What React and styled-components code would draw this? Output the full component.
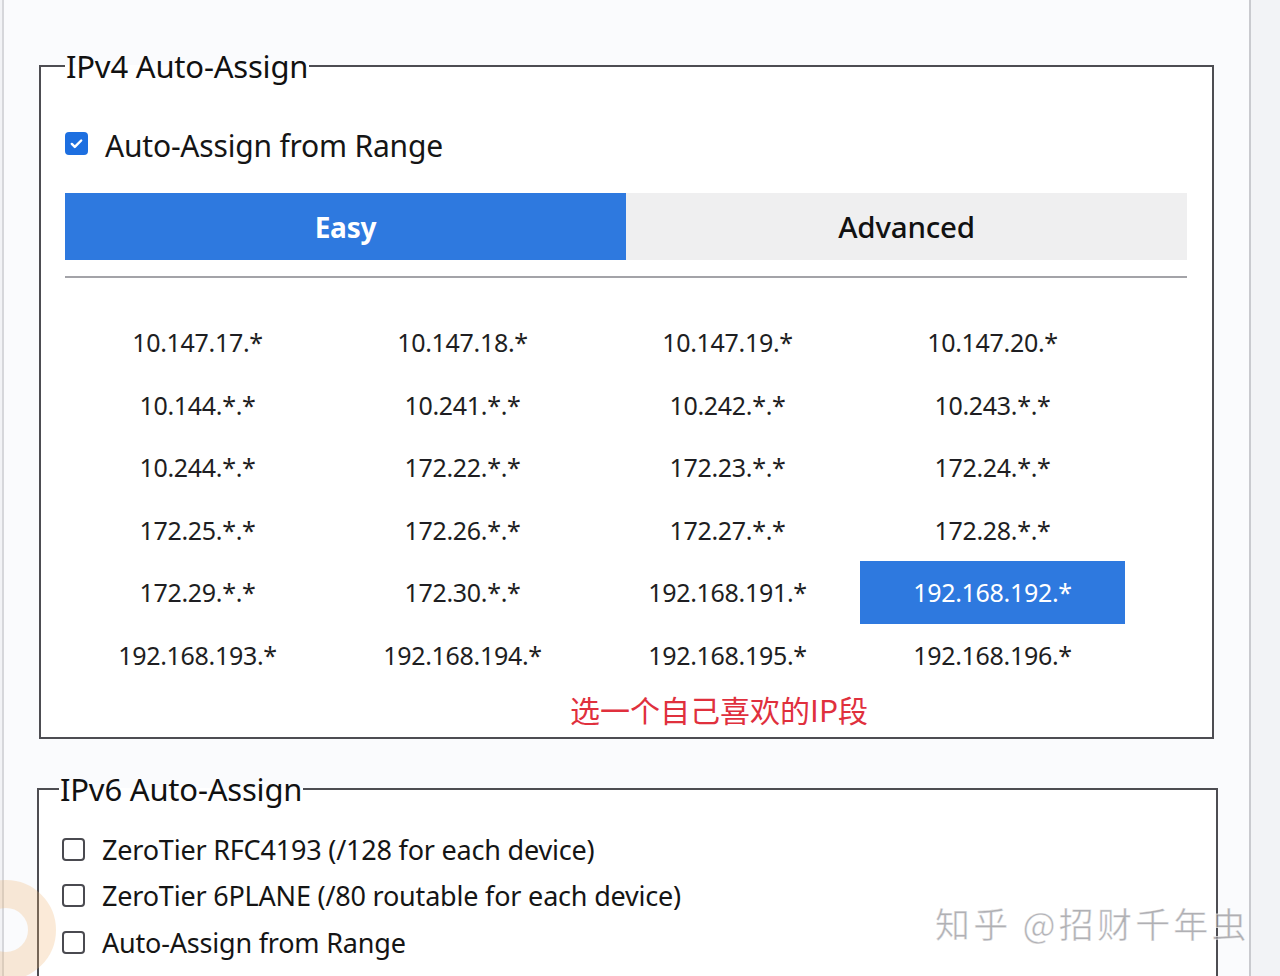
import styled, { createGlobalStyle } from "styled-components";

const ranges = [
  "10.147.17.*", "10.147.18.*", "10.147.19.*", "10.147.20.*",
  "10.144.*.*", "10.241.*.*", "10.242.*.*", "10.243.*.*",
  "10.244.*.*", "172.22.*.*", "172.23.*.*", "172.24.*.*",
  "172.25.*.*", "172.26.*.*", "172.27.*.*", "172.28.*.*",
  "172.29.*.*", "172.30.*.*", "192.168.191.*", "192.168.192.*",
  "192.168.193.*", "192.168.194.*", "192.168.195.*", "192.168.196.*",
];

const ipv6Options = [
  "ZeroTier RFC4193 (/128 for each device)",
  "ZeroTier 6PLANE (/80 routable for each device)",
  "Auto-Assign from Range",
];

const GlobalStyle = createGlobalStyle`
  html, body {
    margin: 0;
    padding: 0;
    background: #f2f3f6;
    font-family: "Noto Sans", "Noto Sans CJK SC", sans-serif;
    color: #1b1b1f;
  }
`;

const Page = styled.div`
  position: relative;
  display: flex;
  width: 1280px;
  height: 976px;
  overflow: hidden;
`;

const Panel = styled.div`
  width: 1249px;
  margin-left: 2px;
  border-left: 2px solid #d6d7db;
  border-right: 2px solid #c9cacf;
  background: #fafbfd;
  padding: 50px 0 0 35px;
  box-sizing: border-box;
`;

const Fieldset = styled.fieldset`
  margin: 0;
  width: ${(p) => p.$width}px;
  box-sizing: border-box;
  border: 2px solid #4d4d52;
  padding: ${(p) => p.$padding};
  background: #ffffff;
  margin-left: ${(p) => p.$offset || 0}px;
`;

const Legend = styled.legend`
  font-size: 31px;
  line-height: 32px;
  padding: 0 1px;
  margin-left: ${(p) => p.$shift || 0}px;
  color: #111;
  letter-spacing: -0.2px;
`;

const CheckRow = styled.label`
  display: flex;
  align-items: center;
  gap: 17px;
  font-size: ${(p) => p.$size}px;
  height: ${(p) => p.$height}px;
  color: #151515;
  letter-spacing: -0.2px;
`;

const Box = styled.span`
  width: 23px;
  height: 23px;
  box-sizing: border-box;
  border-radius: 4px;
  flex-shrink: 0;
  display: flex;
  align-items: center;
  justify-content: center;
  margin-bottom: ${(p) => (p.$checked ? 4 : 0)}px;
  background: ${(p) => (p.$checked ? "#1d6fe0" : "#fff")};
  border: ${(p) => (p.$checked ? "none" : "2px solid #4a4a50")};
`;

const Tabs = styled.div`
  display: grid;
  grid-template-columns: 1fr 1fr;
  height: 67px;
  margin-top: 26px;
`;

const Tab = styled.div`
  display: flex;
  align-items: center;
  justify-content: center;
  font-size: ${(p) => (p.$active ? 28 : 29.5)}px;
  font-weight: ${(p) => (p.$active ? 700 : 500)};
  color: ${(p) => (p.$active ? "#fff" : "#111")};
  background: ${(p) => (p.$active ? "#2e79df" : "#efeff0")};
  letter-spacing: -0.2px;
`;

const Rule = styled.div`
  height: 2px;
  background: #a3a3a8;
  margin-top: 16px;
`;

const Grid = styled.div`
  display: grid;
  grid-template-columns: repeat(4, 265px);
  grid-auto-rows: 62.5px;
  margin-top: 33px;
`;

const Cell = styled.div`
  display: flex;
  align-items: center;
  justify-content: center;
  font-size: 25px;
  color: ${(p) => (p.$active ? "#fff" : "#1e1e22")};
  background: ${(p) => (p.$active ? "#2e79df" : "transparent")};
  letter-spacing: -0.3px;
`;

const Hint = styled.div`
  text-align: center;
  color: #e0303d;
  font-size: 30px;
  line-height: 44px;
  font-family: "Noto Sans CJK SC", sans-serif;
  margin-top: 1px;
  padding-left: 186px;
  height: 50px;
`;

const Options = styled.div`
  display: flex;
  flex-direction: column;
  margin-top: 21px;
`;

const Watermark = styled.div`
  position: absolute;
  left: 935px;
  top: 897px;
  font-family: "Noto Sans CJK SC", sans-serif;
  font-size: 35px;
  color: rgba(150, 150, 155, 0.75);
  -webkit-text-stroke: 1px rgba(255, 255, 255, 0.6);
  letter-spacing: 3.2px;
  white-space: nowrap;
`;

const Blob = styled.svg`
  position: absolute;
  left: -44px;
  top: 880px;
  opacity: 0.25;
`;

const Check = () => (
  <svg width="15" height="15" viewBox="0 0 16 16">
    <path d="M3 8.5l3.2 3.2L13 4.8" fill="none" stroke="#fff" strokeWidth="2.6" strokeLinecap="round" strokeLinejoin="round" />
  </svg>
);

export default function App() {
  return (
    <Page>
      <GlobalStyle />
      <Panel>
        <Fieldset $width={1175} $padding="0 25px 0 24px">
          <Legend>IPv4 Auto-Assign</Legend>
          <CheckRow $size={30} $height={44} style={{ marginTop: "41px" }}>
            <Box $checked>
              <Check />
            </Box>
            Auto-Assign from Range
          </CheckRow>
          <Tabs>
            <Tab $active>Easy</Tab>
            <Tab>Advanced</Tab>
          </Tabs>
          <Rule />
          <Grid>
            {ranges.map((r) => (
              <Cell key={r} $active={r === "192.168.192.*"}>
                {r}
              </Cell>
            ))}
          </Grid>
          <Hint>选一个自己喜欢的IP段</Hint>
        </Fieldset>
        <Fieldset $width={1181} $offset={-2} $padding="0 20px 30px 23px" style={{ marginTop: "34px" }}>
          <Legend $shift={-3}>IPv6 Auto-Assign</Legend>
          <Options>
            {ipv6Options.map((o) => (
              <CheckRow key={o} $size={27} $height={46.5}>
                <Box />
                {o}
              </CheckRow>
            ))}
          </Options>
        </Fieldset>
      </Panel>
      <Blob width="100" height="100" viewBox="0 0 100 100">
        <circle cx="50" cy="50" r="36" fill="none" stroke="#f0b067" strokeWidth="28" />
      </Blob>
      <Watermark>知乎 @招财千年虫</Watermark>
    </Page>
  );
}
